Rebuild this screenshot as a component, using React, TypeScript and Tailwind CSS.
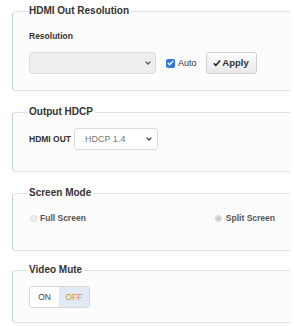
import React from "react";

const Chevron = ({ color = "#555" }: { color?: string }) => (
  <svg width="6" height="4" viewBox="0 0 6 4" className="shrink-0">
    <polyline points="0.6,0.6 3,3 5.4,0.6" fill="none" stroke={color} strokeWidth="1.3" />
  </svg>
);

function Box({ title, mt, children, pt, pb }: { title: string; mt: string; pt: string; pb: string; children: React.ReactNode }) {
  return (
    <fieldset
      className={`${mt} ${pt} ${pb} w-[278px] border border-r-0 border-[#dbe3ea] border-l-[#bfd2e1] rounded-l-[4px] bg-[#fcfcfc] pl-[16px] pr-[15px]`}
    >
      <legend className="-ml-[2px] px-[2px] text-[10px] leading-[12px] font-bold text-[#333]">{title}</legend>
      {children}
    </fieldset>
  );
}

export default function App() {
  return (
    <div
      className="w-[294px] h-[326px] overflow-hidden bg-white pl-[12px] pt-[1px]"
      style={{ fontFamily: '"Liberation Sans", Arial, sans-serif' }}
    >
      <Box title="HDMI Out Resolution" mt="mt-[4px]" pt="pt-[13px]" pb="pb-[16px]">
        <div className="text-[8.5px] leading-[12px] font-bold text-[#333]">Resolution</div>
        <div className="mt-[10px] flex items-center h-[22px]">
          <div className="w-[127px] h-[22px] rounded-[4px] border border-[#dcdcdc] bg-[#eeeeee] flex items-center justify-end pr-[4px]">
            <Chevron />
          </div>
          <div className="ml-[10px] w-[9px] h-[9px] rounded-[2px] bg-[#2e7be0] flex items-center justify-center">
            <svg width="7" height="6" viewBox="0 0 7 6">
              <polyline points="0.8,3 2.7,4.8 6.2,0.9" fill="none" stroke="white" strokeWidth="1.4" />
            </svg>
          </div>
          <span className="ml-[3px] text-[9px] leading-[12px] text-[#333]">Auto</span>
          <button className="ml-[9px] w-[51px] h-[22px] rounded-[3px] border border-[#cfcfcf] bg-gradient-to-b from-white to-[#e8e8e8] flex items-center justify-center gap-[1px] text-[9.5px] font-bold text-[#333]">
            <svg width="8" height="7" viewBox="0 0 8 7">
              <path d="M0.3 3.9 L2.9 6.6 L7.7 1.1 L6.5 0.1 L2.8 4.3 L1.4 2.8 Z" fill="#222" />
            </svg>
            Apply
          </button>
        </div>
      </Box>

      <Box title="Output HDCP" mt="mt-[15px]" pt="pt-[10px]" pb="pb-[21px]">
        <div className="flex items-center h-[22px]">
          <span className="text-[8.5px] leading-[12px] font-bold text-[#333]">HDMI OUT</span>
          <div className="ml-[3px] w-[84px] h-[22px] rounded-[3px] border border-[#dcdcdc] bg-white flex items-center justify-between pl-[10px] pr-[5px]">
            <span className="text-[9px] leading-[12px] text-[#777]">HDCP 1.4</span>
            <Chevron color="#444" />
          </div>
        </div>
      </Box>

      <Box title="Screen Mode" mt="mt-[15px]" pt="pt-[13px]" pb="pb-[26px]">
        <div className="flex items-center justify-between h-[12px]">
          <div className="flex items-center">
            <span className="ml-[1px] w-[7px] h-[7px] rounded-full border border-[#d8d8d8] bg-[#f0f0f0]" />
            <span className="ml-[3px] text-[8.5px] leading-[12px] font-bold text-[#555]">Full Screen</span>
          </div>
          <div className="flex items-center">
            <span className="w-[7px] h-[7px] rounded-full border border-[#d0d0d0] bg-[#e6e6e6] flex items-center justify-center">
              <span className="w-[3px] h-[3px] rounded-full bg-[#bdbdbd]" />
            </span>
            <span className="ml-[4px] text-[8.5px] leading-[12px] font-bold text-[#555]">Split Screen</span>
          </div>
        </div>
      </Box>

      <Box title="Video Mute" mt="mt-[13px]" pt="pt-[10px]" pb="pb-[14px]">
        <div className="flex w-[61px] h-[22px] rounded-[3px] border border-[#d6d6d6] overflow-hidden">
          <div className="w-[29px] bg-white flex items-center justify-center text-[8.5px] text-[#444]">ON</div>
          <div className="flex-1 bg-[#dfeaf5] flex items-center justify-center text-[8.5px] text-[#e3882f]">OFF</div>
        </div>
      </Box>
    </div>
  );
}
